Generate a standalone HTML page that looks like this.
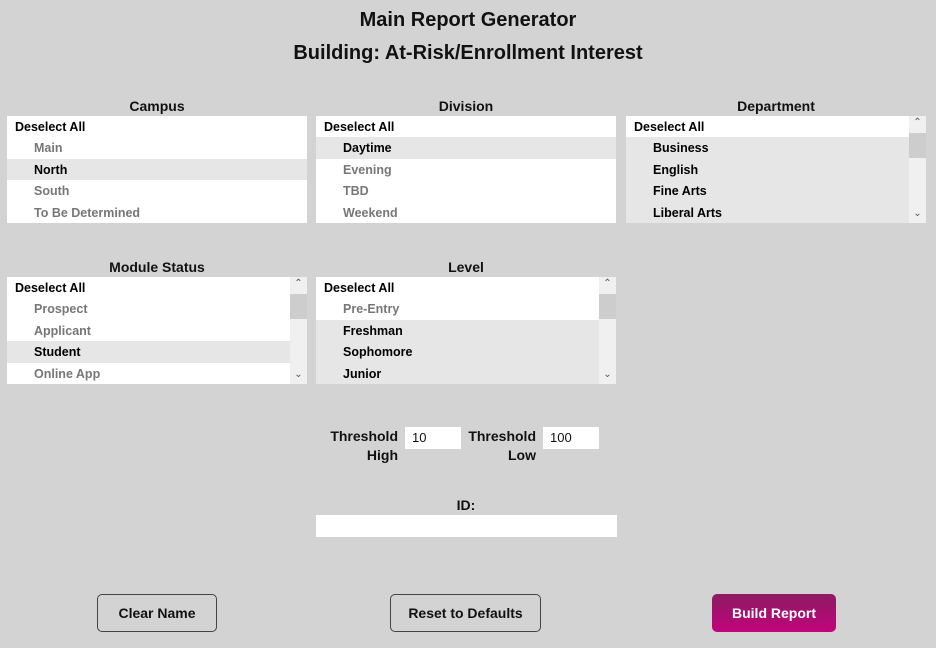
<!DOCTYPE html>
<html><head><style>
*{margin:0;padding:0;box-sizing:border-box}
body{width:936px;height:648px;background:#d3d3d3;font-family:"Liberation Sans",sans-serif;position:relative;overflow:hidden;color:#111}
.a{position:absolute}
.t{width:936px;text-align:center;font-size:20px;font-weight:bold;left:0}
.lbl{font-size:14px;font-weight:bold;text-align:center;width:300px}
.box{background:#fff;width:300px;height:107px;overflow:hidden}
.r{height:21.4px;line-height:23px;font-size:12.5px;font-weight:bold;padding-left:27px;color:#777}
.r.h{padding-left:8px;color:#000;background:#fff}
.r.s{background:#e6e6e6;color:#000}
.sb{position:absolute;right:0;top:0;width:17px;height:107px;background:#f0f0f0}
.th{position:absolute;left:0;width:17px;height:25px;background:#cdcdcd}
.ar{position:absolute;left:0;width:17px;text-align:center;font-size:10px;color:#555}
.in{background:#fff;height:22px;font-size:13px;line-height:22px;padding-left:7px}
.tl{font-size:14px;font-weight:bold;text-align:right;line-height:19px;width:70px}
.btn{height:38px;border:1px solid #444;border-radius:5px;font-size:14px;font-weight:bold;text-align:center;line-height:36px}
</style></head><body>
<div class="a t" style="top:9px">Main Report Generator</div>
<div class="a t" style="top:42px">Building: At-Risk/Enrollment Interest</div>

<div class="a lbl" style="left:7px;top:98px">Campus</div>
<div class="a box" style="left:7px;top:116px">
<div class="r h">Deselect All</div><div class="r">Main</div><div class="r s">North</div><div class="r">South</div><div class="r">To Be Determined</div></div>

<div class="a lbl" style="left:316px;top:98px">Division</div>
<div class="a box" style="left:316px;top:116px">
<div class="r h">Deselect All</div><div class="r s">Daytime</div><div class="r">Evening</div><div class="r">TBD</div><div class="r">Weekend</div></div>

<div class="a lbl" style="left:626px;top:98px">Department</div>
<div class="a box" style="left:626px;top:116px;background:#e6e6e6">
<div class="r h">Deselect All</div><div class="r s">Business</div><div class="r s">English</div><div class="r s">Fine Arts</div><div class="r s">Liberal Arts</div>
<div class="sb"><div class="ar" style="top:1px">&#8963;</div><div class="th" style="top:17px"></div><div class="ar" style="top:92px">&#8964;</div></div></div>

<div class="a lbl" style="left:7px;top:259px">Module Status</div>
<div class="a box" style="left:7px;top:277px">
<div class="r h">Deselect All</div><div class="r">Prospect</div><div class="r">Applicant</div><div class="r s">Student</div><div class="r">Online App</div>
<div class="sb"><div class="ar" style="top:1px">&#8963;</div><div class="th" style="top:17px"></div><div class="ar" style="top:92px">&#8964;</div></div></div>

<div class="a lbl" style="left:316px;top:259px">Level</div>
<div class="a box" style="left:316px;top:277px;background:#e6e6e6">
<div class="r h">Deselect All</div><div class="r" style="background:#fff">Pre-Entry</div><div class="r s">Freshman</div><div class="r s">Sophomore</div><div class="r s">Junior</div>
<div class="sb"><div class="ar" style="top:1px">&#8963;</div><div class="th" style="top:17px"></div><div class="ar" style="top:92px">&#8964;</div></div></div>

<div class="a tl" style="left:328px;top:427px">Threshold High</div>
<div class="a in" style="left:405px;top:427px;width:56px">10</div>
<div class="a tl" style="left:466px;top:427px">Threshold Low</div>
<div class="a in" style="left:543px;top:427px;width:56px">100</div>

<div class="a lbl" style="left:316px;top:497px">ID:</div>
<div class="a in" style="left:316px;top:515px;width:301px"></div>

<div class="a btn" style="left:97px;top:594px;width:120px">Clear Name</div>
<div class="a btn" style="left:390px;top:594px;width:151px">Reset to Defaults</div>
<div class="a btn" style="left:712px;top:594px;width:124px;border:none;line-height:38px;color:#fff;background:linear-gradient(#8e1b62,#c0047c)">Build Report</div>
</body></html>
